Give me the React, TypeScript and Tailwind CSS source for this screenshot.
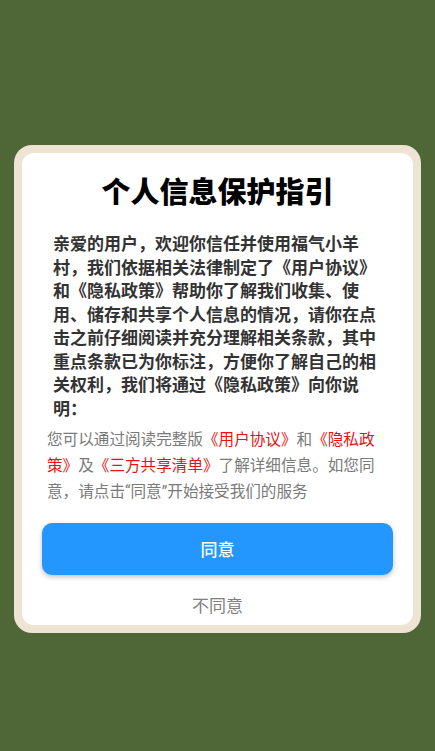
import React from "react";

const cjk = { fontFamily: '"Noto Sans CJK SC", "Noto Sans", sans-serif' };
const latin = { fontFamily: 'Roboto, "Liberation Sans", sans-serif' };

export default function App() {
  return (
    <div className="min-h-[751px] w-full bg-[#4f6737] pt-[145px] px-[14px]" style={cjk}>
      {/* Outer cream frame */}
      <div className="w-full rounded-[18px] bg-[#efe4d3] p-[8px]">
        <div className="flex flex-col rounded-[12px] bg-white px-5 pt-[17px] pb-[8px] [text-spacing-trim:space-all]">
          <h1 className="text-center text-[29px] leading-[40px] font-black text-black">个人信息保护指引</h1>

          <p className="mt-[21px] pl-[11px] pr-[13px] text-[17px] leading-[23.5px] font-bold text-[#333]">
            亲爱的用户，欢迎你信任并使用福气小羊村，我们依据相关法律制定了《用户协议》和《隐私政策》帮助你了解我们收集、使用、储存和共享个人信息的情况，请你在点击之前仔细阅读并充分理解相关条款，其中重点条款已为你标注，方便你了解自己的相关权利，我们将通过《隐私政策》向你说明：
          </p>

          <p className="mt-[6px] px-[5px] text-[15.6px] leading-[26px] text-[#7a7a7a]">
            您可以通过阅读完整版<span className="text-[#e5130f]">《用户协议》</span>和<span className="text-[#e5130f]">《隐私政策》</span>及<span className="text-[#e5130f]">《三方共享清单》</span>了解详细信息。如您同意，请点击<span className="leading-none" style={latin}>“</span>同意<span className="leading-none" style={latin}>”</span>开始接受我们的服务
          </p>

          <button className="mt-[20px] h-[52px] w-full rounded-[10px] bg-[#2397fe] text-[17px] font-medium text-white shadow-[0_2px_5px_rgba(0,0,0,0.25)]">
            同意
          </button>

          <button className="mt-[18px] h-[24px] text-[17px] leading-[24px] text-[#808080]">不同意</button>
        </div>
      </div>
    </div>
  );
}
